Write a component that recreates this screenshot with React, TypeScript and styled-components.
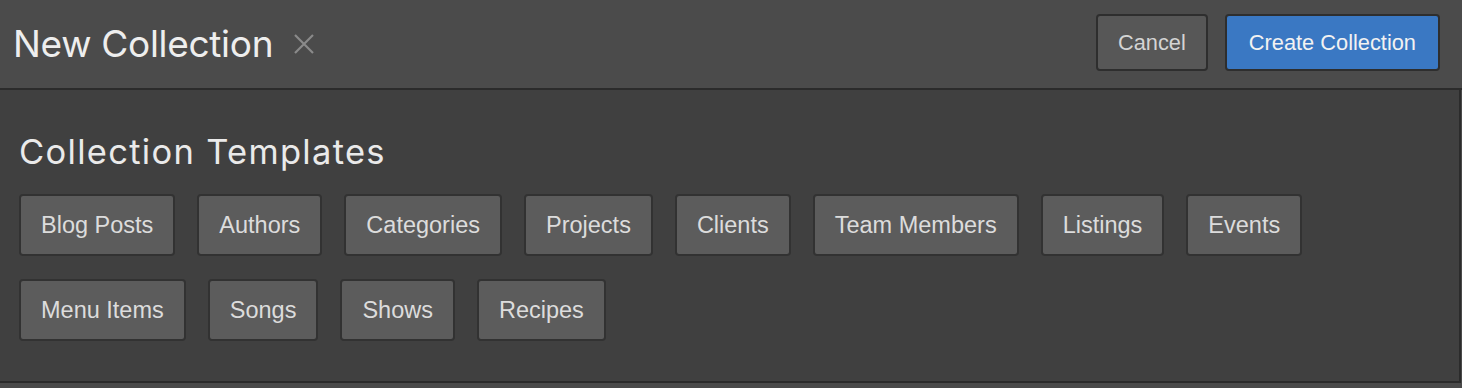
import React from "react";
import styled, { createGlobalStyle } from "styled-components";

const Global = createGlobalStyle`
  html, body {
    margin: 0;
    padding: 0;
    background: #4a4a4a;
  }
  * {
    box-sizing: border-box;
  }
`;

const Page = styled.div`
  width: 1462px;
  height: 388px;
  display: flex;
  flex-direction: column;
  background: #4a4a4a;
  overflow: hidden;
`;

const Header = styled.header`
  height: 90px;
  flex: none;
  display: flex;
  align-items: center;
  justify-content: space-between;
  padding: 0 22px 2px 13px;
  background: #4b4b4b;
  border-bottom: 2px solid #2b2b2b;
`;

const TitleGroup = styled.div`
  display: flex;
  align-items: center;
  gap: 20px;
`;

const Title = styled.h1`
  margin: 0;
  font-family: Inter, "Noto Sans", sans-serif;
  font-weight: 400;
  font-size: 37px;
  letter-spacing: -0.3px;
  color: #eeeeee;
`;

const Close = styled.button`
  border: 0;
  padding: 0;
  background: none;
  display: flex;
  margin-top: 2px;
`;

const Actions = styled.div`
  display: flex;
  gap: 17px;
  margin-top: -1px;
`;

const ActionButton = styled.button<{ $primary?: boolean }>`
  height: 57px;
  padding: 0 ${(p) => (p.$primary ? "22px" : "20px")};
  border: 2px solid #2e2e2e;
  border-radius: 4px;
  background: ${(p) => (p.$primary ? "#3a78c3" : "#575757")};
  color: ${(p) => (p.$primary ? "#f2f2f2" : "#d4d4d4")};
  font-family: "Liberation Sans", Arial, sans-serif;
  font-size: 21.8px;
`;

const Body = styled.section`
  height: 293px;
  flex: none;
  width: 1461px;
  background: #404040;
  border-right: 2px solid #2b2b2b;
  border-bottom: 2px solid #2b2b2b;
  padding: 42px 19px 0;
`;

const SectionTitle = styled.h2`
  margin: 0 0 22px;
  font-family: Inter, "Noto Sans", sans-serif;
  font-weight: 400;
  font-size: 34.5px;
  line-height: 40px;
  letter-spacing: 1.3px;
  color: #eaeaea;
`;

const Grid = styled.div`
  display: flex;
  flex-wrap: wrap;
  column-gap: 22px;
  row-gap: 23px;
  width: 1300px;
`;

const Template = styled.button`
  height: 62px;
  padding: 0 20px;
  border: 2px solid #323232;
  border-radius: 4px;
  background: #5c5c5c;
  color: #dcdcdc;
  font-family: "Liberation Sans", Arial, sans-serif;
  font-size: 23.5px;
`;

const templates = [
  ["Blog Posts", "Authors", "Categories", "Projects", "Clients", "Team Members", "Listings", "Events"],
  ["Menu Items", "Songs", "Shows", "Recipes"],
];

export default function App() {
  return (
    <Page>
      <Global />
      <Header>
        <TitleGroup>
          <Title>New Collection</Title>
          <Close aria-label="Close">
            <svg width="22" height="20" viewBox="0 0 22 20">
              <path d="M2 1 L20 19 M20 1 L2 19" stroke="#8a8a8a" strokeWidth="2.2" />
            </svg>
          </Close>
        </TitleGroup>
        <Actions>
          <ActionButton>Cancel</ActionButton>
          <ActionButton $primary>Create Collection</ActionButton>
        </Actions>
      </Header>
      <Body>
        <SectionTitle>Collection Templates</SectionTitle>
        <Grid>
          {templates.map((row) =>
            row.map((name) => <Template key={name}>{name}</Template>)
          )}
        </Grid>
      </Body>
    </Page>
  );
}
